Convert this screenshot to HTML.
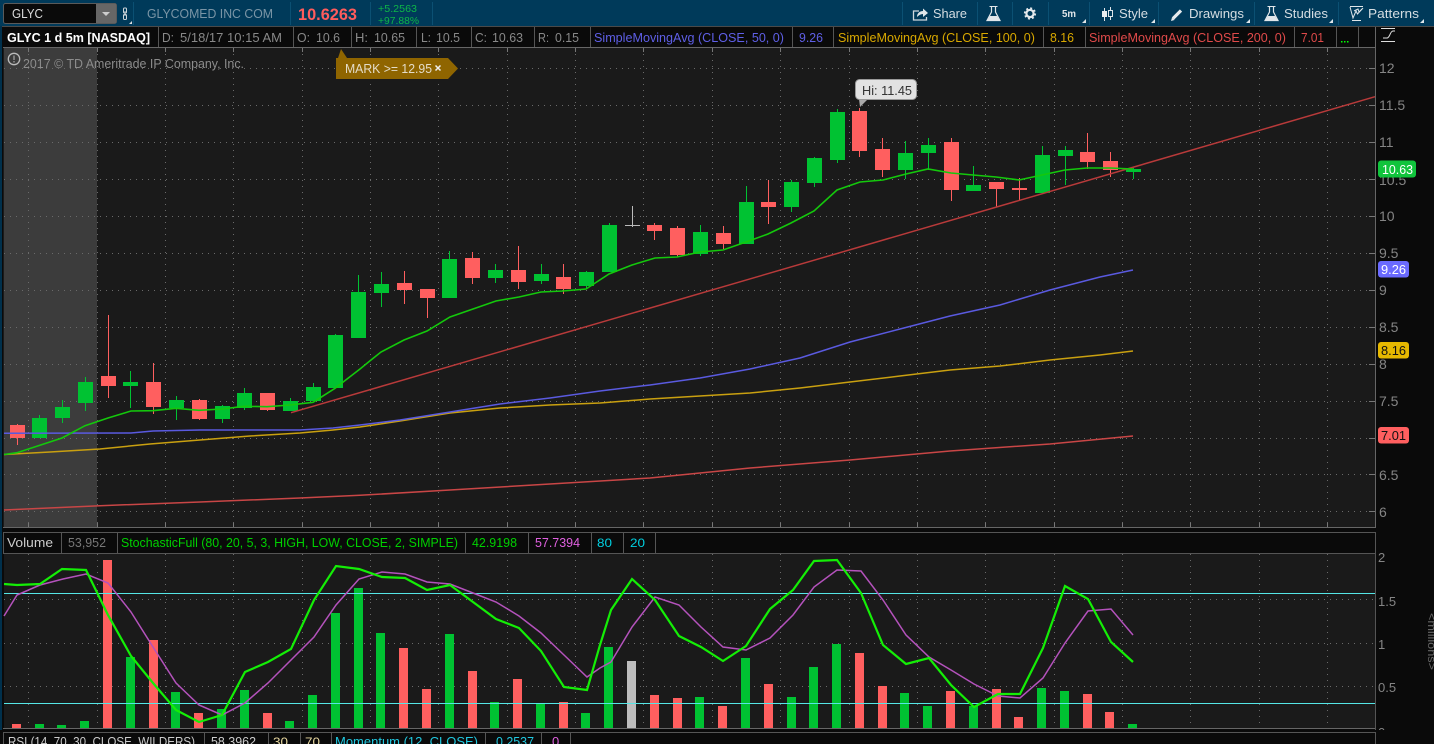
<!DOCTYPE html>
<html><head><meta charset="utf-8"><style>
html,body{margin:0;padding:0;background:#0a0a0a;width:1434px;height:744px;overflow:hidden}
svg{display:block;position:absolute;left:0;top:0}
text{font-family:"Liberation Sans",sans-serif;font-size:13px;fill:#888;white-space:pre}
.c{shape-rendering:crispEdges}
.ax{font-size:14px;fill:#858585}
.ax2{font-size:13px;fill:#858585}
.tb{fill:#d5dde2;font-size:13px}
</style></head><body>
<svg width="1434" height="744" viewBox="0 0 1434 744" xmlns="http://www.w3.org/2000/svg">
<rect width="1434" height="744" fill="#0a0a0a"/>
<!-- top bar -->
<rect class="c" width="1434" height="26" fill="#003a5a"/>
<rect class="c" y="26" width="1434" height="1" fill="#4a4a4a"/>
<rect class="c" x="0" y="26" width="2" height="718" fill="#00304c"/>
<rect x="3.5" y="3.5" width="113" height="20" rx="2" fill="#0a0a0a" stroke="#5a5a5a"/>
<rect class="c" x="96" y="4" width="20" height="19" fill="#666"/>
<path d="M102 12h8l-4 4z" fill="#ccc"/>
<text x="12" y="18" class="tb" textLength="31" lengthAdjust="spacingAndGlyphs" style="fill:#ddd">GLYC</text>
<rect x="123.500" y="8" width="3" height="5" rx="1" fill="none" stroke="#cdd5da"/>
<rect x="123.500" y="14.500" width="3" height="5" rx="1" fill="none" stroke="#cdd5da"/>
<path d="M125 11v5" stroke="#cdd5da" fill="none"/>
<path d="M132 21v3h-3z" fill="#ddd"/>
<path class="c" d="M133.500 2V25M290.500 2V25M370.500 2V25M432.500 2V25M902.500 2V25M977.500 2V25M1012.500 2V25M1048.500 2V25M1089.500 2V25M1158.500 2V25M1254.500 2V25M1338.500 2V25" stroke="#0b5073" fill="none"/>
<text x="147" y="18" textLength="126" lengthAdjust="spacingAndGlyphs" style="fill:#7a95a6">GLYCOMED INC COM</text>
<text x="298" y="20" textLength="59" lengthAdjust="spacingAndGlyphs" style="fill:#ff5c5c;font-size:17px;font-weight:bold">10.6263</text>
<text x="378" y="12" textLength="39" lengthAdjust="spacingAndGlyphs" style="fill:#0db648;font-size:10.500px">+5.2563</text>
<text x="378" y="24" textLength="41" lengthAdjust="spacingAndGlyphs" style="fill:#0db648;font-size:10.500px">+97.88%</text>
<!-- share -->
<path d="M919 11h-5.500v9h13v-3" fill="none" stroke="#cfd8dd" stroke-width="1.300"/>
<path d="M917 17c0-4 3-6 6-6V8.500l5 4.500-5 4v-3c-2 0-4 1-6 3z" fill="#e0e6ea"/>
<text x="933" y="18" class="tb" textLength="34" lengthAdjust="spacingAndGlyphs">Share</text>
<!-- flask -->
<path d="M991.500 6.500V12l-4.500 8.500h13L995.500 12V6.500" fill="none" stroke="#e0e6ea" stroke-width="1.200"/><path d="M990 16h7l3 5h-13z" fill="#e0e6ea"/><path class="c" d="M989.500 6.500h8" stroke="#e0e6ea"/>
<!-- gear -->
<circle cx="1030" cy="13.500" r="3.600" fill="none" stroke="#e4e9ec" stroke-width="2.200"/>
<circle cx="1030" cy="13.500" r="5.200" fill="none" stroke="#e4e9ec" stroke-width="1.800" stroke-dasharray="2 2.080"/>
<!-- 5m -->
<text x="1062" y="17" textLength="14" lengthAdjust="spacingAndGlyphs" style="fill:#dfe5e9;font-size:10px;font-weight:bold">5m</text>
<path d="M1086 19v4h-4zM1155 19v4h-4zM1250 19v4h-4zM1333 19v4h-4zM1424 19v4h-4z" fill="#dfe5e9"/>
<!-- style -->
<path d="M1104.500 8V21M1110.500 7V20" stroke="#dfe5e9" fill="none"/><rect x="1102" y="11" width="5" height="6" fill="#e8edf0"/><rect x="1108.500" y="10.500" width="4" height="6" fill="#003a5a" stroke="#dfe5e9"/>
<text x="1119" y="18" class="tb" textLength="29" lengthAdjust="spacingAndGlyphs">Style</text>
<!-- pencil -->
<path d="M1173 18.500l8-8" stroke="#e6ebee" stroke-width="3.200" fill="none"/><path d="M1171 21l1-3.500 2.500 2.500z" fill="#e6ebee"/>
<text x="1189" y="18" class="tb" textLength="55" lengthAdjust="spacingAndGlyphs">Drawings</text>
<!-- studies flask -->
<path d="M1269.500 6.500V12l-4.500 8.500h13L1273.500 12V6.500" fill="none" stroke="#e0e6ea" stroke-width="1.200"/><path d="M1268 16h7l3 5h-13z" fill="#e0e6ea"/><path class="c" d="M1267.500 6.500h8" stroke="#e0e6ea"/>
<text x="1284" y="18" class="tb" textLength="44" lengthAdjust="spacingAndGlyphs">Studies</text>
<!-- patterns -->
<path class="c" d="M1350 6.500h13M1352 20.500h9" stroke="#dfe5e9" stroke-width="1"/>
<path d="M1350 7l3 11 3-7 1.500 3 5.500-6" fill="none" stroke="#dfe5e9" stroke-width="1"/>
<path d="M1354 11l4-2 1 3 3-3" fill="none" stroke="#dfe5e9" stroke-width="1"/>
<text x="1368" y="18" class="tb" textLength="51" lengthAdjust="spacingAndGlyphs">Patterns</text>

<!-- info row -->
<rect class="c" x="3" y="27" width="1372" height="21" fill="#0a0a0a"/>
<path class="c" d="M158.500 27V48M293.500 27V48M351.500 27V48M416.500 27V48M471.500 27V48M534.500 27V48M590.500 27V48M792.500 27V48M833.500 27V48M1043.500 27V48M1085.500 27V48M1294.500 27V48M1336.500 27V48M1358.500 27V48" stroke="#555" fill="none"/>
<text x="7" y="42" textLength="143" lengthAdjust="spacingAndGlyphs" style="fill:#fff;font-weight:bold">GLYC 1 d 5m [NASDAQ]</text>
<text x="162" y="42" textLength="12" lengthAdjust="spacingAndGlyphs">D:</text>
<text x="180" y="42" textLength="102" lengthAdjust="spacingAndGlyphs">5/18/17 10:15 AM</text>
<text x="297" y="42" textLength="13" lengthAdjust="spacingAndGlyphs">O:</text><text x="316" y="42" textLength="24" lengthAdjust="spacingAndGlyphs">10.6</text>
<text x="355" y="42" textLength="13" lengthAdjust="spacingAndGlyphs">H:</text><text x="374" y="42" textLength="31" lengthAdjust="spacingAndGlyphs">10.65</text>
<text x="421" y="42" textLength="10" lengthAdjust="spacingAndGlyphs">L:</text><text x="436" y="42" textLength="24" lengthAdjust="spacingAndGlyphs">10.5</text>
<text x="475" y="42" textLength="12" lengthAdjust="spacingAndGlyphs">C:</text><text x="492" y="42" textLength="31" lengthAdjust="spacingAndGlyphs">10.63</text>
<text x="538" y="42" textLength="11" lengthAdjust="spacingAndGlyphs">R:</text><text x="555" y="42" textLength="24" lengthAdjust="spacingAndGlyphs">0.15</text>
<text x="594" y="42" textLength="190" lengthAdjust="spacingAndGlyphs" style="fill:#5f5fe6">SimpleMovingAvg (CLOSE, 50, 0)</text>
<text x="799" y="42" textLength="24" lengthAdjust="spacingAndGlyphs" style="fill:#5f5fe6">9.26</text>
<text x="838" y="42" textLength="197" lengthAdjust="spacingAndGlyphs" style="fill:#d9a800">SimpleMovingAvg (CLOSE, 100, 0)</text>
<text x="1050" y="42" textLength="24" lengthAdjust="spacingAndGlyphs" style="fill:#d9a800">8.16</text>
<text x="1089" y="42" textLength="197" lengthAdjust="spacingAndGlyphs" style="fill:#e04a4a">SimpleMovingAvg (CLOSE, 200, 0)</text>
<text x="1301" y="42" textLength="23" lengthAdjust="spacingAndGlyphs" style="fill:#e04a4a">7.01</text>
<path class="c" d="M1341 41.500h1.500M1344 41.500h1.500M1347 41.500h1.500" stroke="#0f0" stroke-width="1.500"/>
<path class="c" d="M1381 28.500h14M1381 41.500h14" stroke="#ddd" stroke-width="1"/>
<path d="M1383 38h4c3 0 3-7 6-7h2" stroke="#ddd" fill="none" stroke-width="1"/>

<!-- main chart -->
<rect class="c" x="3" y="48" width="1372" height="479" fill="#1a1a1a"/>
<rect class="c" x="4" y="48" width="93" height="479" fill="#3c3c3c"/>
<path class="c" d="M3 47.500H1375M3 527.500H1375" stroke="#666" fill="none"/>
<path class="c" d="M1375.500 27V528" stroke="#666" fill="none"/>
<!-- grid -->
<path d="M4 68.500H1369M4 105.500H1369M4 142.500H1369M4 179.500H1369M4 216.500H1369M4 253.500H1369M4 290.500H1369M4 327.500H1369M4 364.500H1369M4 401.500H1369M4 438.500H1369M4 474.500H1369M4 511.500H1369" stroke="#6a6a6a" stroke-dasharray="1 5" fill="none"/>
<path class="c" d="M1369 68.500h6M1369 105.500h6M1369 142.500h6M1369 179.500h6M1369 216.500h6M1369 253.500h6M1369 290.500h6M1369 327.500h6M1369 364.500h6M1369 401.500h6M1369 438.500h6M1369 474.500h6M1369 511.500h6" stroke="#777" fill="none"/>
<path d="M28.500 48V527M97.500 48V527M165.500 48V527M233.500 48V527M302.500 48V527M370.500 48V527M438.500 48V527M507.500 48V527M575.500 48V527M643.500 48V527M712.500 48V527M780.500 48V527M849.500 48V527M917.500 48V527M985.500 48V527M1054.500 48V527M1122.500 48V527M1190.500 48V527M1259.500 48V527M1327.500 48V527" stroke="#6a6a6a" stroke-dasharray="1 5" fill="none"/>
<path class="c" d="M28.500 48v4M97.500 48v4M165.500 48v4M233.500 48v4M302.500 48v4M370.500 48v4M438.500 48v4M507.500 48v4M575.500 48v4M643.500 48v4M712.500 48v4M780.500 48v4M849.500 48v4M917.500 48v4M985.500 48v4M1054.500 48v4M1122.500 48v4M1190.500 48v4M1259.500 48v4M1327.500 48v4M28.500 523v4M97.500 523v4M165.500 523v4M233.500 523v4M302.500 523v4M370.500 523v4M438.500 523v4M507.500 523v4M575.500 523v4M643.500 523v4M712.500 523v4M780.500 523v4M849.500 523v4M917.500 523v4M985.500 523v4M1054.500 523v4M1122.500 523v4M1190.500 523v4M1259.500 523v4M1327.500 523v4" stroke="#777" fill="none"/>
<!-- axis labels -->
<text class="ax" x="1379" y="73">12</text><text class="ax" x="1379" y="110">11.5</text><text class="ax" x="1379" y="147">11</text><text class="ax" x="1379" y="185">10.5</text><text class="ax" x="1379" y="221">10</text><text class="ax" x="1379" y="258">9.5</text><text class="ax" x="1379" y="295">9</text><text class="ax" x="1379" y="332">8.5</text><text class="ax" x="1379" y="369">8</text><text class="ax" x="1379" y="406">7.5</text><text class="ax" x="1379" y="443">7</text><text class="ax" x="1379" y="480">6.5</text><text class="ax" x="1379" y="517">6</text>
<!-- copyright -->
<circle cx="14" cy="59" r="5.700" fill="none" stroke="#bbb" stroke-width="1.300"/><path class="c" d="M14 55.500v4.500M14 61v1.500" stroke="#bbb" stroke-width="1.300"/>
<text x="23" y="68" textLength="221" lengthAdjust="spacingAndGlyphs" style="fill:#8c8c8c">2017 © TD Ameritrade IP Company, Inc.</text>
<!-- mark -->
<path d="M336 79V58h2l3-9 6 9h101l10 10.500L448 79z" fill="#8f6500"/>
<text x="345" y="73" textLength="87" lengthAdjust="spacingAndGlyphs" style="fill:#e4dcc8">MARK &gt;= 12.95</text>
<path d="M435.500 65.500l5 5M440.500 65.500l-5 5" stroke="#eee" stroke-width="1.500" fill="none"/>
<!-- wicks -->
<path class="c" d="M39.500 415V438M62.500 400V423M85.500 377V411M130.500 371V408M176.500 396V420M222.500 405V423M244.500 388V410M290.500 398V411M313.500 383V401M335.500 334V388M358.500 275V338M381.500 272V307M449.500 251V298M495.500 264V283M541.500 264V284M586.500 271V289M609.500 223V272M700.500 225V256M746.500 186V244M791.500 180V212M814.500 157V187M837.500 109V163M905.500 141V179M928.500 138V170M973.500 166V191M1042.500 146V193M1065.500 146V185M1133.500 168V179" stroke="#00c232" fill="none"/>
<path class="c" d="M17.500 424V445M108.500 315V398M153.500 363V414M199.500 399V420M267.500 393V411M404.500 271V304M427.500 289V318M472.500 252V284M518.500 246V289M563.500 264V294M654.500 223V240M677.500 226V257M723.500 226V249M768.500 180V224M859.500 108V157M882.500 138V177M951.500 138V201M996.500 182V207M1019.500 178V201M1087.500 133V169M1110.500 152V177" stroke="#ff5f5f" fill="none"/>
<!-- bodies -->
<path class="c" d="M39.500 418V438M62.500 407V418M85.500 382V403M130.500 382V386M176.500 400V408M222.500 406V419M244.500 393V408M290.500 401V411M313.500 387V401M335.500 335V388M358.500 292V338M381.500 284V293M449.500 259V298M495.500 270V278M541.500 274V281M586.500 272V286M609.500 225V272M700.500 232V254M746.500 202V244M791.500 182V207M814.500 158V183M837.500 112V160M905.500 153V170M928.500 145V153M973.500 185V191M1042.500 155V193M1065.500 150V156M1133.500 169V172" stroke="#00c232" stroke-width="15" fill="none"/>
<path class="c" d="M17.500 425V438M108.500 376V386M153.500 382V407M199.500 400V419M267.500 393V410M404.500 283V290M427.500 289V298M472.500 258V278M518.500 270V282M563.500 277V289M654.500 225V231M677.500 228V255M723.500 233V244M768.500 202V207M859.500 111V151M882.500 149V170M951.500 142V190M996.500 182V189M1019.500 188V190M1087.500 152V162M1110.500 161V170" stroke="#ff5f5f" stroke-width="15" fill="none"/>
<path class="c" d="M632.500 206V227" stroke="#bbb" fill="none"/><path class="c" d="M625 225.500H640" stroke="#bbb" stroke-width="1" fill="none"/>
<!-- moving averages -->
<polyline points="4,510 100,505.700 200,502 300,498 360,495.300 450,490 550,484 650,478 750,468 850,460 950,451 1050,444 1133,436" fill="none" stroke="#c94646" stroke-width="1.500"/>
<polyline points="4,454.500 50,452 100,449 150,444 200,440 250,436 300,433 333,430 360,427 400,421 450,413 500,408 550,405 600,403 650,399 700,396 750,393 800,388 850,382 900,376 950,370 1000,366 1050,360 1100,355 1133,351" fill="none" stroke="#c9a010" stroke-width="1.500"/>
<polyline points="4,433.300 131,433 153,431 200,430 300,430 333,428 360,425 400,420 450,412 500,404 550,398 600,391 650,385 700,378 750,369 800,358 850,342 900,329 950,316 1000,305 1050,290 1100,277 1133,270" fill="none" stroke="#5a5ae0" stroke-width="1.500"/>
<polyline points="291,412.700 1375,96.700" fill="none" stroke="#b83a3a" stroke-width="1.500"/>
<polyline points="4,454.500 17,452.700 62,438 85,425.700 108,418 131,411 153,410.700 176,408.300 199,410.300 222,409 244,406.300 267,406.700 290,405 313,402.300 335,388.300 360,369 371,360 381,352 404,340 427,331 450,317 473,309 496,301 519,297 541,292 563,291 586,289 609,274 632,265 655,258 677,257 700,252 723,250 746,242 768,234 791,223 814,211 837,190 860,182 883,180 906,174 928,169 951,173 973,175 996,177 1019,180 1042,175 1065,170 1087,168 1110,168 1133,169" fill="none" stroke="#14c80c" stroke-width="1.600"/>
<!-- hi bubble -->
<path d="M859 99l1 8 8-8z" fill="#aaa"/>
<rect x="855.500" y="79.500" width="61" height="20" rx="4" fill="#e2e2e2" stroke="#999" stroke-width="1"/>
<text x="862" y="95" textLength="50" lengthAdjust="spacingAndGlyphs" style="fill:#333">Hi: 11.45</text>
<!-- badges -->
<rect x="1378" y="160.500" width="38" height="17" rx="3" fill="#10c43c"/><text x="1382" y="174" textLength="31" lengthAdjust="spacingAndGlyphs" style="fill:#fff">10.63</text>
<rect x="1378" y="261" width="31" height="16.500" rx="3" fill="#6a6aff"/><text x="1381" y="274" textLength="25" lengthAdjust="spacingAndGlyphs" style="fill:#fff">9.26</text>
<rect x="1378" y="342" width="31" height="16.500" rx="3" fill="#e6b800"/><text x="1381" y="355" textLength="25" lengthAdjust="spacingAndGlyphs" style="fill:#111">8.16</text>
<rect x="1378" y="427" width="31" height="16.500" rx="3" fill="#ff5f5f"/><text x="1381" y="440" textLength="25" lengthAdjust="spacingAndGlyphs" style="fill:#111">7.01</text>

<!-- lower row -->
<rect class="c" x="3" y="532" width="1372" height="21" fill="#0a0a0a"/>
<path class="c" d="M3 532.500H1375M3 553.500H1375M3.500 532V553M61.500 532V553M117.500 532V553M465.500 532V553M528.500 532V553M591.500 532V553M623.500 532V553M655.500 532V553M1375.500 532V730" stroke="#555" fill="none"/>
<text x="7" y="547" textLength="46" lengthAdjust="spacingAndGlyphs" style="fill:#ccc">Volume</text>
<text x="68" y="547" textLength="38" lengthAdjust="spacingAndGlyphs" style="fill:#777">53,952</text>
<text x="121" y="547" textLength="337" lengthAdjust="spacingAndGlyphs" style="fill:#00d000">StochasticFull (80, 20, 5, 3, HIGH, LOW, CLOSE, 2, SIMPLE)</text>
<text x="472" y="547" textLength="45" lengthAdjust="spacingAndGlyphs" style="fill:#00d000">42.9198</text>
<text x="535" y="547" textLength="45" lengthAdjust="spacingAndGlyphs" style="fill:#e060e0">57.7394</text>
<text x="597" y="547" textLength="15" lengthAdjust="spacingAndGlyphs" style="fill:#00d0e0;font-size:12px">80</text>
<text x="630" y="547" textLength="15" lengthAdjust="spacingAndGlyphs" style="fill:#00d0e0;font-size:12px">20</text>
<!-- lower panel -->
<rect class="c" x="4" y="554" width="1371" height="174" fill="#1a1a1a"/>
<path d="M4 599.500H1375M4 643.500H1375M4 686.500H1375" stroke="#6a6a6a" stroke-dasharray="1 5" fill="none"/>
<path d="M28.500 554V728M97.500 554V728M165.500 554V728M233.500 554V728M302.500 554V728M370.500 554V728M438.500 554V728M507.500 554V728M575.500 554V728M643.500 554V728M712.500 554V728M780.500 554V728M849.500 554V728M917.500 554V728M985.500 554V728M1054.500 554V728M1122.500 554V728M1190.500 554V728M1259.500 554V728M1327.500 554V728" stroke="#6a6a6a" stroke-dasharray="1 5" fill="none"/>
<path class="c" d="M39.500 724V728M61.500 725V728M84.500 721V728M130.500 657V728M175.500 692V728M221.500 709V728M244.500 690V728M289.500 721V728M312.500 695V728M335.500 613V728M358.500 588V728M380.500 633V728M449.500 634V728M494.500 702V728M540.500 703V728M585.500 713V728M608.500 647V728M699.500 697V728M745.500 658V728M791.500 697V728M813.500 667V728M836.500 644V728M904.500 693V728M927.500 706V728M973.500 706V728M1041.500 688V728M1064.500 691V728M1132.500 724V728" stroke="#00c232" stroke-width="9" fill="none"/>
<path class="c" d="M16.500 724V728M107.500 560V728M153.500 640V728M198.500 713V728M267.500 713V728M403.500 648V728M426.500 689V728M472.500 671V728M517.500 679V728M563.500 702V728M654.500 695V728M677.500 698V728M722.500 706V728M768.500 684V728M859.500 653V728M882.500 686V728M950.500 691V728M996.500 689V728M1018.500 717V728M1087.500 694V728M1109.500 712V728" stroke="#ff5f5f" stroke-width="9" fill="none"/>
<path class="c" d="M631.500 661V728" stroke="#bdbdbd" stroke-width="9" fill="none"/>
<path class="c" d="M4 593.500H1375M4 703.500H1375" stroke="#55e6e6" fill="none"/>
<polyline points="4,616 17,595 40,585 63,579 86,574 108,583 131,612 153,647 176,683 199,705 222,715 245,703 268,683 291,660 314,637 336,605 359,579 382,572 405,574 427,582 450,584 473,593 496,602 519,616 541,633 564,655 587,677 600,668 611,662 632,627 655,597 679,605 701,627 723,647 746,650 770,638 793,615 814,587 837,570 861,571 883,600 906,635 929,657 951,670 974,684 998,696 1020,698 1043,678 1065,643 1088,611 1111,609 1133,635" fill="none" stroke="#b452bc" stroke-width="1.500"/>
<polyline points="4,584 17,585 40,584 62,569 86,570 108,615 131,656 153,683 176,710 199,722 222,715 245,672 268,662 291,649 314,600 336,566 359,569 382,577 405,578 427,590 450,585 473,602 496,619 519,628 541,651 564,687 587,690 600,645 611,610 632,579 655,600 679,636 701,647 723,661 746,646 770,609 793,590 814,561 837,560 861,593 883,645 906,664 929,658 951,685 974,707 998,694 1020,694 1043,648 1065,586 1088,599 1111,642 1133,662" fill="none" stroke="#14ee06" stroke-width="2.200"/>
<text class="ax2" x="1378" y="562">2</text><text class="ax2" x="1378" y="606">1.5</text><text class="ax2" x="1378" y="649">1</text><text class="ax2" x="1378" y="692">0.5</text>
<text transform="translate(1428,613) rotate(90)" textLength="57" lengthAdjust="spacingAndGlyphs" style="fill:#666;font-size:11px">&lt;millions&gt;</text>
<text class="ax2" x="1378" y="737">0</text>
<rect class="c" x="0" y="730" width="1375" height="14" fill="#0a0a0a"/>
<rect class="c" x="1376" y="730" width="58" height="14" fill="#0a0a0a"/>
<path class="c" d="M3 728.500H1375" stroke="#666" fill="none"/>
<!-- bottom row -->
<path class="c" d="M3 732.500H1375M3.500 732V744M204.500 732V744M268.500 732V744M300.500 732V744M331.500 732V744M485.500 732V744M541.500 732V744M570.500 732V744M1375.500 732V744" stroke="#555" fill="none"/>
<text x="8" y="746" textLength="187" lengthAdjust="spacingAndGlyphs" style="fill:#ccc">RSI (14, 70, 30, CLOSE, WILDERS)</text>
<text x="211" y="746" textLength="45" lengthAdjust="spacingAndGlyphs" style="fill:#ccc">58.3962</text>
<text x="273" y="746" textLength="15" lengthAdjust="spacingAndGlyphs" style="fill:#e8d8a0;font-size:12px">30</text>
<text x="305" y="746" textLength="15" lengthAdjust="spacingAndGlyphs" style="fill:#e8d8a0;font-size:12px">70</text>
<text x="335" y="746" textLength="143" lengthAdjust="spacingAndGlyphs" style="fill:#20c8e0">Momentum (12, CLOSE)</text>
<text x="496" y="746" textLength="38" lengthAdjust="spacingAndGlyphs" style="fill:#20c8e0">0.2537</text>
<text x="552" y="746" style="fill:#e060e0">0</text>
</svg>
</body></html>
